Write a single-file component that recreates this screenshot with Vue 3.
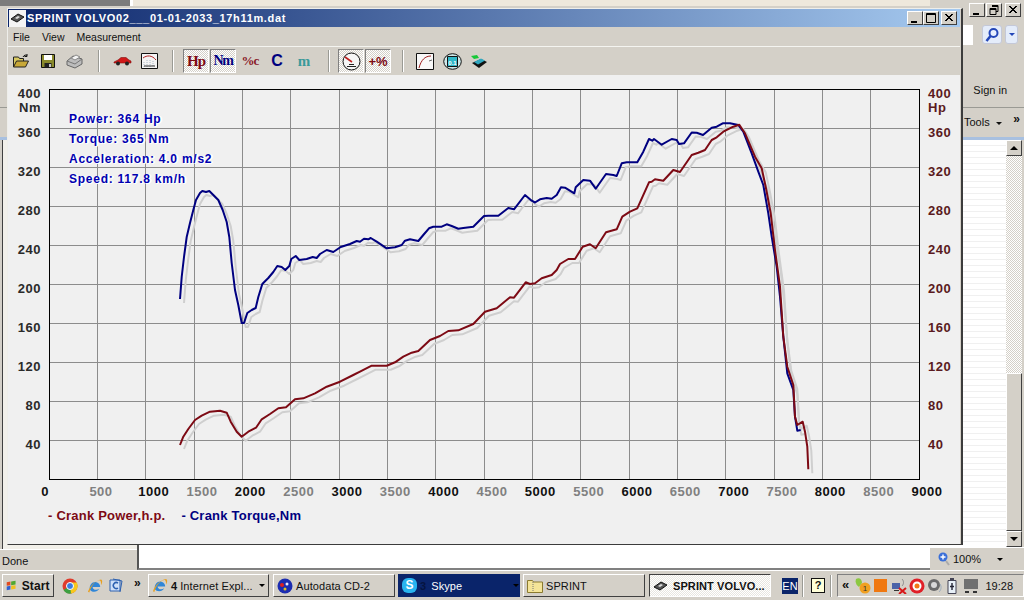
<template>
  <div class="screen">
    <!-- browser window behind the app -->
    <div class="ie">
      <div class="ie-top">
        <div class="ie-strip"></div>
        <div class="ie-row ie-caption">
          <span class="capbtn"><svg width="14" height="12" viewBox="0 0 14 12"><path d="M3 9h6v2H3z" fill="#000"/></svg></span>
          <span class="capbtn"><svg width="14" height="12" viewBox="0 0 14 12"><path d="M5 1.5h6v6H9M3 4.5h6v6H3zM5 2.5h6M3 5.5h6" fill="none" stroke="#000"/></svg></span>
          <span class="capbtn cap-close"><svg width="14" height="12" viewBox="0 0 14 12"><path d="M3 2l7 7M4 2l7 7M10 2L3 9M11 2L4 9" stroke="#000"/></svg></span>
        </div>
        <div class="ie-row ie-address">
          <span class="addr"></span>
          <span class="search"><svg width="16" height="16" viewBox="0 0 16 16"><circle cx="9.5" cy="6" r="4" fill="#e8f0ff" stroke="#2346b8" stroke-width="2"/><path d="M6.5 9L2.5 14" stroke="#2346b8" stroke-width="2.5"/></svg></span>
          <span class="search-drop"><i></i></span>
        </div>
        <div class="ie-row ie-sign">Sign in</div>
        <div class="ie-row ie-tools"><span class="tools">Tools <i></i></span><span class="chev">»</span></div>
      </div>
      <div class="ie-body">
        <div class="ie-left">
          <div class="ie-left-fill"></div>
          <div class="status">Done</div>
        </div>
        <div class="ie-main"></div>
        <div class="ie-right">
          <div class="ie-page">
            <div class="stripes"></div>
            <div class="scroll">
              <span class="scroll-btn"><i class="up"></i></span>
              <div class="scroll-track"><div class="scroll-thumb"></div></div>
              <span class="scroll-btn"><i class="down"></i></span>
            </div>
          </div>
          <div class="zoombar">
            <svg width="12" height="14" viewBox="0 0 12 14"><circle cx="5" cy="5" r="4.5" fill="#3a6fd8"/><path d="M5 2.5v5M2.5 5h5" stroke="#fff" stroke-width="1.4"/><path d="M8 9l3 4" stroke="#aaa" stroke-width="2"/></svg>
            <span class="zoomtxt">100%</span><i class="down"></i>
          </div>
        </div>
      </div>
    </div>

    <!-- dyno window -->
    <div class="win">
      <div class="title">
        <span class="app-ico"><svg width="15" height="14" viewBox="0 0 15 14"><path d="M1 8l7-5 6 3-7 5z" fill="#555" stroke="#111"/><path d="M5 7l3-2 2 1-3 2z" fill="#ddd"/></svg></span>
        <span class="title-text">SPRINT  VOLVO02___01-01-2033_17h11m.dat</span>
        <span class="title-btns">
          <span class="capbtn"><svg width="14" height="12" viewBox="0 0 14 12"><path d="M3 9h6v2H3z" fill="#000"/></svg></span>
          <span class="capbtn"><svg width="14" height="12" viewBox="0 0 14 12"><path d="M2.5 1.5h9v9h-9zM2.5 2.5h9" fill="none" stroke="#000"/></svg></span>
          <span class="capbtn cap-close"><svg width="14" height="12" viewBox="0 0 14 12"><path d="M3 2l7 7M4 2l7 7M10 2L3 9M11 2L4 9" stroke="#000"/></svg></span>
        </span>
      </div>
      <div class="menu"><span>File</span><span>View</span><span>Measurement</span></div>
      <div class="toolbar">
        <span class="tb"><svg width="18" height="16" viewBox="0 0 18 16"><path d="M1.5 14V4h5l1 1.5h4V8" fill="#d8c860" stroke="#222"/><path d="M1.5 14l3-6h12l-3 6z" fill="#c8a838" stroke="#222"/><path d="M11 4c1-2 3-2.5 4-1.5M15 1v2.5h-2.500" fill="none" stroke="#111"/></svg></span>
        <span class="tb"><svg width="16" height="16" viewBox="0 0 16 16"><path d="M1.5 1.5h13v13h-13z" fill="#8a8a2c" stroke="#111"/><path d="M4 2h8v5H4z" fill="#fff"/><path d="M4.5 10h7v4.500h-7z" fill="#222"/><path d="M9 11h2v3H9z" fill="#c8c8c8"/></svg></span>
        <span class="tb"><svg width="18" height="16" viewBox="0 0 18 16"><path d="M1 8l6-5 9 3v5l-7 4-8-3z" fill="#bcbcbc" stroke="#666"/><path d="M1 8l8 3 7-5" fill="none" stroke="#777"/><path d="M5 5l5-3 4 2-5 3z" fill="#f4f4f4" stroke="#888"/></svg></span>
        <span class="sep"></span>
        <span class="tb"><svg width="19" height="10" viewBox="0 0 19 10"><path d="M1 6l4-2 3-2.500h5L16 4l2 1v2H1z" fill="#d01818" stroke="#801010" stroke-width=".6"/><circle cx="5" cy="7.500" r="2" fill="#222"/><circle cx="14" cy="7.500" r="2" fill="#222"/></svg></span>
        <span class="tb"><svg width="17" height="16" viewBox="0 0 17 16"><path d="M.5.5h16v15H.5z" fill="#f4f4f4" stroke="#111"/><path d="M2 5c4-3 9-3 13 2" fill="none" stroke="#b02020"/><path d="M3 9v5M6 7v7M9 7v7M12 8v6" stroke="#9ab" stroke-width=".8" stroke-dasharray="1 1"/><path d="M3 13h11" stroke="#333"/></svg></span>
        <span class="sep"></span>
        <span class="tb pressed hp">Hp</span>
        <span class="tb pressed nm">Nm</span>
        <span class="tb pc">%c</span>
        <span class="tb cc">C</span>
        <span class="tb mm">m</span>
        <span class="sep sep2"></span>
        <span class="tb pressed first"><svg width="19" height="19" viewBox="0 0 19 19"><circle cx="9.5" cy="9.500" r="8.500" fill="#f6f6f6" stroke="#111"/><path d="M3 5l7 5" stroke="#c02020" stroke-width="1.600"/><path d="M5 14.500h9M7 12.500h5" stroke="#222"/></svg></span>
        <span class="tb pressed plus">+%</span>
        <span class="sep sep2"></span>
        <span class="tb first"><svg width="18" height="17" viewBox="0 0 18 17"><path d="M.5.500h17v16H.5z" fill="#f8f8f8" stroke="#111"/><path d="M3 15C5 7 9 3 15 3" fill="none" stroke="#a02020"/><path d="M13 8l3-1" stroke="#666"/></svg></span>
        <span class="tb"><svg width="19" height="17" viewBox="0 0 19 17"><ellipse cx="9.5" cy="8.500" rx="8.800" ry="7.800" fill="#cfe8e8" stroke="#111"/><path d="M4.500 3.500h10v10h-10z" fill="#30b8c8" stroke="#111"/><text x="9.500" y="11.500" class="tiny">0.1</text></svg></span>
        <span class="tb"><svg width="18" height="15" viewBox="0 0 18 15"><path d="M2 9l9-4 6 3-8 6z" fill="#111"/><path d="M4 8l7-3.500 4 2-7 4z" fill="#30a8c0"/><path d="M7 1L1 2l3 3 5-1z" fill="#18c838"/></svg></span>
      </div>
      <div class="client">
        <svg class="chart" width="952" height="425" viewBox="8 75 952 425">
          <rect x="49.500" y="89.500" width="870" height="390" fill="#f0f0f0" />
          <path v-for="x in gridX" :key="'x' + x" :d="`M${x} 90V479`" stroke="#8c8c8c" fill="none" />
          <path v-for="y in gridY" :key="'y' + y" :d="`M50 ${y}H919`" stroke="#8c8c8c" fill="none" />
          <rect x="49.500" y="89.500" width="870" height="390" fill="none" stroke="#000" />

          <polyline :points="torque" class="curve" stroke="#cfcfcf" transform="translate(4 4)" />
          <polyline :points="power" class="curve" stroke="#cfcfcf" transform="translate(4 4)" />
          <polyline :points="torque" class="curve" stroke="#000080" />
          <polyline :points="power" class="curve" stroke="#7d0a14" />

          <text v-for="t in leftLabels" :key="'l' + t.label" x="41" :y="t.y" class="axis end" fill="#2a2a2a">{{ t.label }}</text>
          <text v-for="t in leftLabels" :key="'r' + t.label" x="928" :y="t.y" class="axis" fill="#5a1a20">{{ t.label === 'Nm' ? 'Hp' : t.label }}</text>
          <text v-for="t in bottomLabels" :key="'b' + t.label" :x="t.x" y="496" class="axis mid" :fill="t.fill">{{ t.label }}</text>
        </svg>
        <ul class="readout">
          <li>Power: 364 Hp</li>
          <li>Torque: 365 Nm</li>
          <li>Acceleration: 4.0 m/s2</li>
          <li>Speed: 117.8 km/h</li>
        </ul>
        <div class="legend">
          <span class="lg-power">- Crank Power,h.p.</span>
          <span class="lg-torque">- Crank Torque,Nm</span>
        </div>
      </div>
    </div>

    <!-- taskbar -->
    <div class="taskbar">
      <span class="task start">
        <svg width="14" height="13" viewBox="0 0 14 13"><path d="M1 2l5-1v5l-5 1z" fill="#e04a20"/><path d="M7 1l6-1v5l-6 1z" fill="#50a830"/><path d="M1 8l5-1v5l-5 1z" fill="#3060d0"/><path d="M7 7l6-1v5l-6 1z" fill="#f0c020"/></svg>
        Start
      </span>
      <span class="quick">
        <svg width="16" height="16" viewBox="0 0 16 16"><circle cx="8" cy="8" r="7.500" fill="#e03c2c"/><path d="M8 8L1.500 12A7.500 7.500 0 0 0 10 15.300z" fill="#3ca040"/><path d="M8 4.500h6.800A7.500 7.500 0 0 1 9 15.400L8 8z" fill="#f8c81c"/><circle cx="8" cy="8" r="3.500" fill="#3a7ce0" stroke="#fff"/></svg>
        <svg class="q-ie" width="16" height="16" viewBox="0 0 17 16"><path d="M3 12C2 7 6 3 10 4c3 1 4 3 4 5H6c0 3 4 4 7 2-2 4-8 4-10 1z" fill="#2f86d8"/><path d="M1 14C3 8 9 2 15 1c2 1 1 4 0 6 0-2 0-5-2-5C8 3 4 9 2.500 15z" fill="#e8a020"/></svg>
        <svg class="q-doc" width="15" height="15" viewBox="0 0 15 15"><path d="M2 2h10v11H2z" fill="#cfe0f8" stroke="#2c60b0"/><path d="M5 1l9 2-2 11" fill="none" stroke="#2c60b0"/><path d="M10 5a3 3 0 1 0 0 5" fill="none" stroke="#2c60b0" stroke-width="1.500"/></svg>
      </span>
      <span class="chev task-chev">»</span>
      <span class="task tk-ie">
        <svg width="16" height="15" viewBox="0 0 17 16"><path d="M3 12C2 7 6 3 10 4c3 1 4 3 4 5H6c0 3 4 4 7 2-2 4-8 4-10 1z" fill="#2f86d8"/><path d="M1 14C3 8 9 2 15 1c2 1 1 4 0 6 0-2 0-5-2-5C8 3 4 9 2.500 15z" fill="#e8a020"/></svg>
        <b>4</b><span class="tk-label">Internet Expl...</span><i class="down"></i>
      </span>
      <span class="task tk-auto">
        <svg width="16" height="16" viewBox="0 0 16 16"><circle cx="8" cy="8" r="7.500" fill="#1c2cb0"/><circle cx="5" cy="7" r="2" fill="#e02020"/><circle cx="10" cy="6" r="1.500" fill="#e8e8ff"/><circle cx="8" cy="11" r="1.500" fill="#e0c020"/></svg>
        <span class="tk-label">Autodata CD-2</span>
      </span>
      <span class="task tk-skype">
        <span class="skype-ico">S</span><b>3</b><span class="tk-label">Skype</span><i class="down"></i>
      </span>
      <span class="task tk-sprint">
        <svg width="16" height="14" viewBox="0 0 16 14"><path d="M.5 1.500h5l1 1.500h9v10.500H.5z" fill="#f4e498" stroke="#8a7a30"/><path d="M6 3v10" stroke="#777" stroke-dasharray="1 1"/></svg>
        <span class="tk-label">SPRINT</span>
      </span>
      <span class="task tk-active">
        <svg width="15" height="14" viewBox="0 0 15 14"><path d="M1 8l7-5 6 3-7 5z" fill="#555" stroke="#111"/><path d="M5 7l3-2 2 1-3 2z" fill="#ddd"/></svg>
        <b class="tk-label">SPRINT  VOLVO...</b>
      </span>
      <span class="lang">EN</span>
      <span class="tray-sep"></span>
      <span class="help">?</span>
      <span class="tray-sep"></span>
      <span class="tray">
        <span class="tray-chev">«</span>
        <svg class="t-green" width="16" height="16" viewBox="0 0 16 16"><path d="M1 1c3-2 6 0 6 4L4 9C1 7 0 4 1 1z" fill="#8cc840"/><circle cx="10" cy="10" r="5.500" fill="#f0a020"/><text x="10" y="13" class="tiny dark">1</text></svg>
        <span class="orange"></span>
        <svg class="t-net" width="16" height="16" viewBox="0 0 16 16"><path d="M1 5h8v6H1z" fill="#4a62a8"/><path d="M3 12h5v1H3z" fill="#333"/><path d="M11 1c2 2 2 5 0 7" fill="none" stroke="#888"/><path d="M8 10l7 6M15 10l-7 6" stroke="#d81818" stroke-width="2"/></svg>
        <svg class="t-red" width="16" height="16" viewBox="0 0 16 16"><circle cx="8" cy="8" r="7.500" fill="#e02028"/><circle cx="8" cy="8" r="4.500" fill="#fff"/><circle cx="8" cy="8" r="2.500" fill="#f07818"/></svg>
        <svg class="t-red" width="16" height="16" viewBox="0 0 16 16"><circle cx="7" cy="7" r="6" fill="#6a6a6a"/><circle cx="7" cy="7" r="3" fill="#d8d8d8"/><path d="M13 6c2 3 1 6-1 8" fill="none" stroke="#9ab"/></svg>
        <svg class="t-net" width="10" height="16" viewBox="0 0 10 16"><path d="M1 2.500h8v13H1z" fill="#e8f0f8" stroke="#445"/><path d="M3 0h4v2H3z" fill="#445"/><path d="M5 5v7M3 8.500h4" stroke="#223" stroke-width="1.400"/></svg>
        <svg class="t-mon" width="14" height="16" viewBox="0 0 14 16"><path d="M0 1h14v10H0z" fill="#707070"/><path d="M1 13h4v2H1zM9 13h4v2H9z" fill="#333"/></svg>
        <span class="clock">19:28</span>
      </span>
    </div>
  </div>
</template>

<script setup>
// screen coordinates of the traced curves, viewBox of the chart matches the page
const torquePts = [
  [180, 299], [181.7, 277], [184, 257], [186.7, 237], [190, 223], [193.3, 210], [196, 200], [200, 193], [202.3, 191],
  [206, 192], [209.3, 191], [213.3, 195], [218.3, 200], [222.7, 210], [226.7, 222], [229.3, 237], [231.7, 263],
  [235, 290], [238.3, 305], [241.7, 323], [244, 323], [247.3, 313], [251.7, 310], [255.7, 308], [258.3, 297],
  [262.3, 284], [268.3, 278], [273.3, 272], [277.3, 266], [281.7, 267], [285.3, 270], [289.3, 266], [291.3, 259],
  [295.7, 256], [299.3, 260], [306.7, 259], [312.7, 257], [316.7, 258], [320, 254], [326.7, 250], [333.3, 252],
  [340.7, 247], [350, 244], [356.7, 241], [360, 241.7], [364, 238.7], [368.3, 239.3], [370.7, 238], [376.7, 241.7],
  [386.7, 248.3], [395, 247.3], [401.7, 245], [405, 240.7], [410, 239.3], [418.3, 241], [423.3, 235], [429, 228.3],
  [433.3, 226.7], [441.7, 226.7], [446.7, 224.3], [451.7, 226], [458.3, 228.7], [463.3, 228], [473.3, 226.7],
  [484, 216], [488.3, 215.7], [498.3, 215.7], [508.3, 208], [514, 209.3], [525, 195], [531.7, 200.7], [535, 202.5],
  [540, 199.3], [546.7, 198], [551.7, 198.7], [556.7, 195], [561, 187.3], [565, 187.7], [574.3, 193.3], [575.7, 187.3],
  [583.3, 180], [590, 180.7], [595.7, 188.7], [606, 174], [613.3, 175], [616.7, 176], [621.7, 163.3], [626.7, 162.3],
  [637.3, 162.3], [643.3, 151.7], [649, 139], [652.3, 140.7], [654, 139], [661.7, 144.7], [671.7, 139], [676.7, 140],
  [679, 144], [684, 143.3], [691.7, 132.5], [696.7, 132.7], [703, 135], [711.7, 127.7], [716.7, 126.7], [722.7, 123.3],
  [730, 123.3], [738.3, 125], [743.3, 131.7], [751.7, 153.3], [758.3, 171.7], [763.3, 185], [768.3, 213.3],
  [771.7, 236.7], [776.7, 266.7], [780, 296.7], [783.3, 336.7], [787.3, 373.3], [793.3, 390], [795, 416.7],
  [797.3, 430.7], [800.7, 430]
]
const powerPts = [
  [180, 445], [183.3, 436.7], [188.3, 429], [195, 420], [201.7, 415.7], [210, 411.7], [220, 410.7], [226.7, 412.7],
  [230.7, 421.7], [236.7, 431.7], [241.7, 436.7], [248.3, 431.7], [256, 427.7], [261.7, 419.3], [270, 414],
  [278.3, 408.3], [286, 407.3], [295, 399.3], [303.3, 398.3], [315, 393.3], [326.7, 386.7], [340, 381.7], [353.3, 375],
  [360, 371.7], [371.7, 365.7], [386.7, 365.7], [395, 362.3], [403.3, 356.7], [411.7, 352.7], [418.3, 351], [430, 340],
  [440, 336], [448.3, 331], [458.3, 330.3], [473.3, 324], [485, 311.7], [496.7, 308.3], [510, 297.3], [514, 297.7],
  [525.7, 282.3], [530, 284], [535, 283.3], [541.7, 278.3], [551.7, 275], [556.7, 270], [560, 264], [568.3, 259],
  [575, 259], [582.7, 246.7], [590, 244.3], [595.7, 248.3], [606, 232.3], [616.7, 229.3], [622.3, 216.7], [630, 211.7],
  [637.3, 208.3], [649, 182.3], [651.7, 181.7], [655, 179.3], [663.3, 180.7], [673.3, 170], [680, 172], [691.7, 155],
  [698.3, 152.7], [705, 150], [711.7, 140], [716.7, 137.3], [723.3, 131.7], [733.3, 126.7], [739.3, 124.7], [745, 133.3],
  [755, 156.7], [761.7, 168.3], [766, 188.3], [770.7, 213.3], [775, 250], [780, 286.7], [783.3, 336.7], [787.3, 366.7],
  [793.3, 385], [795, 416.7], [797.3, 425], [802.7, 421.7], [805, 431.7], [807.3, 446.7], [808.3, 469.3]
]
const toPoints = (pts) => pts.map((p) => p.join(',')).join(' ')
const torque = toPoints(torquePts)
const power = toPoints(powerPts)

const gridX = []
for (let i = 1; i < 18; i++) gridX.push(Math.floor(49 + (870 / 18) * i) + 0.5)
const gridY = []
for (let i = 1; i < 10; i++) gridY.push(89.5 + 39 * i)

const leftLabels = [{ label: '400', y: 98 }, { label: 'Nm', y: 112 }]
for (let v = 360; v >= 40; v -= 40) {
  leftLabels.push({ label: String(v), y: 98 + ((400 - v) / 40) * 39 })
}

const bottomLabels = [{ label: '0', x: 45, fill: '#111' }, { label: '500', x: 101, fill: '#808080' }]
for (let i = 2; i <= 18; i++) {
  const rpm = i * 500
  bottomLabels.push({
    label: String(rpm),
    x: 49 + (870 / 18) * i + 8,
    fill: rpm % 1000 === 0 ? '#111' : '#808080'
  })
}
</script>

<style scoped>
.screen {
  position: relative;
  width: 1024px;
  height: 600px;
  overflow: hidden;
  background: #d4d0c8;
  font-family: "Liberation Sans", Arial, sans-serif;
  display: flex;
  flex-direction: column;
}

/* browser behind */
.ie {
  height: 570px;
  display: flex;
  flex-direction: column;
  flex: none;
}
.ie-top {
  height: 140px;
  flex: none;
  background: #d4d0c8;
  display: flex;
  flex-direction: column;
  border-bottom: 3px solid #a8c0e0;
  box-sizing: border-box;
  position: relative;
}
.ie-strip {
  height: 6px;
  margin-right: 94px;
  background: linear-gradient(90deg, #7c7c7c 0 130px, #fff 130px 133px, #eee8dc 133px);
  position: absolute;
  top: 0;
  left: 0;
  right: 0;
}
.ie-row {
  display: flex;
  justify-content: flex-end;
  align-items: center;
}
.ie-caption {
  height: 13px;
  margin-top: 3px;
  gap: 1px;
  padding-right: 3px;
}
.capbtn {
  width: 16px;
  height: 14px;
  box-sizing: border-box;
  background: #d4d0c8;
  border: 1px solid;
  border-color: #fff #404040 #404040 #fff;
  display: flex;
  align-items: center;
  justify-content: center;
}
.cap-close {
  margin-left: 2px;
}
.ie-address {
  height: 21px;
  margin-top: 8px;
  padding-right: 6px;
  gap: 3px;
}
.addr {
  width: 14px;
  height: 20px;
  background: #fff;
  margin-right: 6px;
}
.search,
.search-drop {
  height: 19px;
  display: flex;
  align-items: center;
  justify-content: center;
  background: #e4ecfa;
  border-radius: 3px;
  border: 1px solid #c4c8d8;
  box-sizing: border-box;
}
.search {
  width: 20px;
}
.search-drop {
  width: 13px;
}
.search-drop i {
  border: 3px solid transparent;
  border-top: 3px solid #2346b8;
  margin-top: 3px;
}
.ie-sign {
  height: 16px;
  margin-top: 37px;
  padding-right: 17px;
  font-size: 11px;
  color: #111;
}
.ie-tools {
  height: 30px;
  margin-top: 9px;
  border-top: 1px solid #9a9a94;
  justify-content: space-between;
  padding: 8px 4px 0 964px;
  box-sizing: border-box;
  font-size: 11px;
  color: #111;
  align-items: flex-start;
}
.tools i {
  display: inline-block;
  border: 3px solid transparent;
  border-top: 3px solid #111;
  margin-left: 3px;
  vertical-align: -2px;
}
.chev {
  font-weight: bold;
  font-size: 12px;
  line-height: 12px;
  margin-top: -3px;
}
.ie-body {
  flex: 1;
  display: flex;
  min-height: 0;
}
.ie-left {
  width: 137px;
  display: flex;
  flex-direction: column;
  flex: none;
}
.ie-left-fill {
  flex: 1;
  background: linear-gradient(90deg, #d4d0c8 0 2px, #404040 2px 3px, #f2f0ea 3px);
}
.status {
  height: 21px;
  line-height: 22px;
  font-size: 11px;
  padding-left: 2px;
  background: #d4d0c8;
  color: #111;
  border-top: 1px solid #fff;
  box-sizing: border-box;
}
.ie-main {
  flex: 1;
  background: #fff;
  border-left: 2px solid #555;
  border-bottom: 2px solid #808080;
}
.ie-right {
  width: 94px;
  flex: none;
  display: flex;
  flex-direction: column;
}
.ie-page {
  flex: 1;
  display: flex;
  min-height: 0;
}
.stripes {
  flex: 1;
  background: repeating-linear-gradient(#fff 0 5px, #f0f0f0 5px 6px);
}
.scroll {
  width: 16px;
  margin-right: 2px;
  display: flex;
  flex-direction: column;
}
.scroll-btn {
  height: 16px;
  box-sizing: border-box;
  background: #d4d0c8;
  border: 1px solid;
  border-color: #fff #404040 #404040 #fff;
  display: flex;
  align-items: center;
  justify-content: center;
  flex: none;
}
.up {
  border: 4px solid transparent;
  border-bottom: 4px solid #000;
  margin-top: -4px;
}
.down {
  border: 4px solid transparent;
  border-top: 4px solid #000;
  margin-top: 4px;
  display: inline-block;
}
.scroll-track {
  flex: 1;
  display: flex;
  flex-direction: column;
  justify-content: flex-end;
  background: repeating-conic-gradient(#fff 0 25%, #d4d0c8 0 50%) 0 0/2px 2px;
}
.scroll-thumb {
  height: 158px;
  background: #d4d0c8;
  box-sizing: border-box;
  border: 1px solid;
  border-color: #fff #404040 #404040 #fff;
}
.zoombar {
  height: 23px;
  flex: none;
  display: flex;
  align-items: center;
  padding-left: 8px;
  font-size: 11px;
  color: #111;
  border-top: 1px solid #fff;
  box-sizing: border-box;
}
.zoomtxt {
  margin-left: 3px;
  margin-right: 16px;
}
.zoombar .down {
  border-width: 3px;
  margin-top: 3px;
}

/* dyno window */
.win {
  position: absolute;
  left: 7px;
  top: 8px;
  width: 956px;
  height: 537px;
  box-sizing: border-box;
  background: #d4d0c8;
  border: 1px solid;
  border-color: #eeeeea #3c3c3c #3c3c3c #eeeeea;
  border-right-width: 2px;
  padding-right: 1px;
  display: flex;
  flex-direction: column;
}
.title {
  height: 18px;
  flex: none;
  display: flex;
  align-items: center;
  background: linear-gradient(90deg, #0a246a, #a6caf0);
}
.app-ico {
  width: 17px;
  height: 17px;
  margin-left: 1px;
  background: #f4f4f4;
  display: flex;
  align-items: center;
  justify-content: center;
}
.title-text {
  margin-left: 1px;
  color: #fff;
  font-weight: bold;
  font-size: 11px;
  letter-spacing: 0.66px;
  white-space: pre;
}
.title-btns {
  margin-left: auto;
  display: flex;
  gap: 0;
  padding-right: 3px;
}
.menu {
  height: 20px;
  flex: none;
  display: flex;
  align-items: center;
  gap: 12px;
  padding-left: 5px;
  font-size: 10.5px;
  color: #111;
  border-bottom: 1px solid #f4f4f0;
  box-sizing: border-box;
}
.toolbar {
  height: 28px;
  flex: none;
  display: flex;
  align-items: center;
  gap: 1px;
}
.tb {
  width: 26px;
  height: 24px;
  flex: none;
  box-sizing: border-box;
  display: flex;
  align-items: center;
  justify-content: center;
  font-family: "Liberation Serif", "Times New Roman", serif;
  font-weight: bold;
}
.pressed {
  border: 1px solid;
  border-color: #808080 #fff #fff #808080;
  background: repeating-conic-gradient(#fff 0 25%, #d4d0c8 0 50%) 0 0/2px 2px;
}
.hp {
  color: #7d0a14;
  font-size: 15px;
  letter-spacing: -1px;
}
.nm {
  color: #000080;
  font-size: 14px;
  letter-spacing: -1.5px;
}
.pc {
  color: #8a1a28;
  font-size: 13px;
  letter-spacing: -1px;
}
.cc {
  color: #000080;
  font-family: "Liberation Sans", sans-serif;
  font-size: 16px;
}
.mm {
  color: #3a9a9a;
  font-size: 15px;
}
.plus {
  color: #7d0a14;
  font-size: 13px;
  font-family: "Liberation Sans", sans-serif;
}
.sep {
  width: 2px;
  height: 22px;
  flex: none;
  margin: 0 8px 0 9px;
  background: linear-gradient(90deg, #9a9a94 50%, #fff 50%);
}
.sep2 {
  margin: 0 7px 0 10px;
}
.client {
  position: relative;
  flex: 1;
  background: #f0f0f0;
  min-height: 0;
}
.chart {
  display: block;
}
.curve {
  fill: none;
  stroke-width: 2;
  stroke-linejoin: round;
}
.axis {
  font-family: "Liberation Sans", Arial, sans-serif;
  font-weight: bold;
  font-size: 13px;
  letter-spacing: 0.5px;
}
.end {
  text-anchor: end;
}
.mid {
  text-anchor: middle;
}
.tiny {
  font-family: "Liberation Sans", sans-serif;
  font-size: 6px;
  fill: #fff;
  text-anchor: middle;
}
.tiny.dark {
  font-size: 8px;
  fill: #333;
}
.readout {
  position: absolute;
  left: 61px;
  top: 34px;
  margin: 0;
  padding: 0;
  list-style: none;
  color: #0000b0;
  font-size: 12px;
  font-weight: bold;
  letter-spacing: 0.75px;
  line-height: 20px;
  text-shadow: 1px 1px 0 #fff, 2px 0 0 #fff;
}
.legend {
  display: flex;
  gap: 16px;
  padding: 8px 0 0 40px;
  font-size: 13px;
  font-weight: bold;
  letter-spacing: 0.22px;
}
.lg-power {
  color: #7d0a14;
}
.lg-torque {
  color: #000080;
}

/* taskbar */
.taskbar {
  height: 30px;
  flex: none;
  display: flex;
  align-items: center;
  padding: 0 0 0 2px;
  box-sizing: border-box;
  background: #d4d0c8;
  border-top: 1px solid #fff;
  font-size: 11px;
  color: #111;
}
.task {
  height: 23px;
  flex: none;
  box-sizing: border-box;
  display: flex;
  align-items: center;
  gap: 3px;
  padding-left: 3px;
  background: #d4d0c8;
  border: 1px solid;
  border-color: #fff #404040 #404040 #fff;
  white-space: pre;
  font-size: 11px;
  letter-spacing: 0.1px;
}
.start {
  width: 52px;
  font-size: 12px;
  font-weight: bold;
  gap: 2px;
}
.quick {
  display: flex;
  align-items: center;
  margin-left: 8px;
}
.q-ie {
  margin-left: 9px;
}
.q-doc {
  margin-left: 5px;
}
.task-chev {
  margin: -6px 0 0 11px;
  width: 14px;
}
.tk-ie {
  width: 121px;
}
.tk-ie .down,
.tk-skype .down {
  border-width: 3px;
  margin: 3px 0 0 3px;
}
.tk-auto {
  width: 122px;
  margin-left: 4px;
}
.tk-skype {
  width: 122px;
  margin-left: 3px;
  background: #0a246a;
  color: #fff;
  border-color: #0a246a;
  padding-left: 3px;
}
.tk-skype b {
  color: #061440;
  margin-right: 2px;
}
.skype-ico {
  width: 15px;
  height: 15px;
  border-radius: 6px;
  background: #28b4f0;
  color: #fff;
  font-weight: bold;
  font-size: 12px;
  text-align: center;
  line-height: 15px;
}
.tk-skype .tk-label {
  flex: 1;
}
.tk-sprint {
  width: 122px;
  margin-left: 3px;
  padding-left: 3px;
}
.tk-active {
  width: 122px;
  margin-left: 4px;
  padding-left: 3px;
  border-color: #404040 #fff #fff #404040;
  background: repeating-conic-gradient(#fff 0 25%, #e8e6e0 0 50%) 0 0/2px 2px;
}
.tk-active b {
  margin-left: 2px;
  font-size: 11px;
  letter-spacing: 0.1px;
}
.lang {
  width: 16px;
  height: 16px;
  margin-left: 11px;
  background: #0a246a;
  color: #fff;
  text-align: center;
  line-height: 16px;
}
.tray-sep {
  width: 2px;
  height: 22px;
  margin-left: 4px;
  background: linear-gradient(90deg, #9a9a94 50%, #fff 50%);
}
.help {
  width: 12px;
  height: 13px;
  margin-left: 7px;
  background: #ffffd8;
  border: 1px solid #111;
  font-weight: bold;
  text-align: center;
  line-height: 13px;
}
.help + .tray-sep {
  margin-left: 5px;
}
.tray {
  flex: 1;
  height: 23px;
  margin-left: 5px;
  box-sizing: border-box;
  border: 1px solid;
  border-color: #808080 #fff #fff #808080;
  display: flex;
  align-items: center;
  padding-left: 4px;
}
.tray-chev {
  width: 8px;
  font-weight: bold;
  font-size: 13px;
  margin-top: -2px;
}
.t-green {
  margin-left: 5px;
}
.orange {
  width: 13px;
  height: 13px;
  background: #f07810;
  margin-left: 3px;
}
.t-net {
  margin-left: 4px;
}
.t-red {
  margin-left: 2px;
}
.t-mon {
  margin-left: 7px;
}
.clock {
  margin-left: auto;
  padding-right: 10px;
  font-size: 11px;
}
</style>
